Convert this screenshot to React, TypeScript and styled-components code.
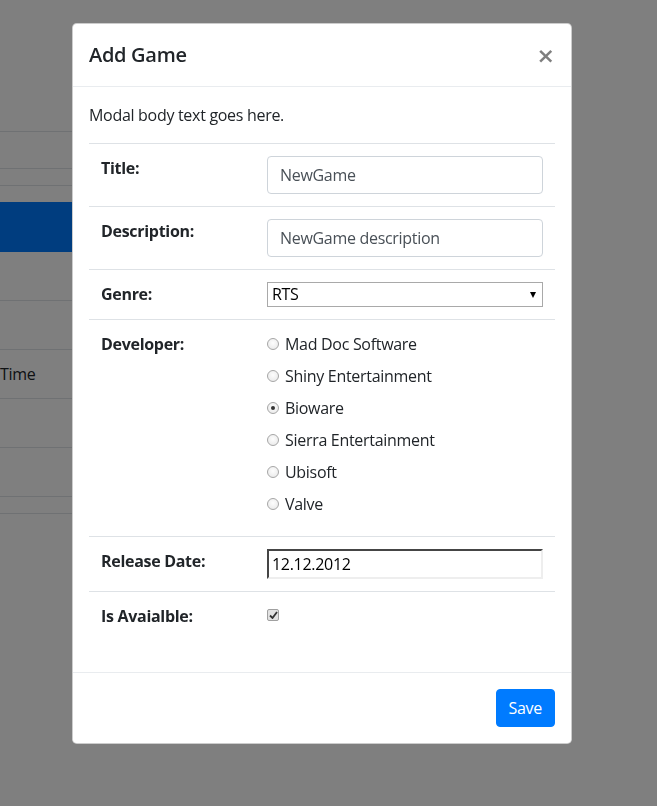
import React from 'react';
import styled, { createGlobalStyle } from 'styled-components';

const GlobalStyle = createGlobalStyle`
  html, body {
    margin: 0;
    padding: 0;
    background: #fff;
    font-family: 'Open Sans', 'Noto Sans', sans-serif;
    letter-spacing: -0.3px;
    color: #212529;
  }
`;

// --- page behind the modal ---

const Page = styled.div`
  width: 420px;
  height: 806px;
  overflow: hidden;
`;

const BgRow = styled.div<{ $h: number; $active?: boolean; $line?: boolean }>`
  box-sizing: border-box;
  height: ${p => p.$h}px;
  border-bottom: ${p => (p.$line ? '1px solid #dee2e6' : 'none')};
  background: ${p => (p.$active ? '#007bff' : 'transparent')};
  display: flex;
  align-items: center;
  font-size: 16px;
  color: #212529;
`;

const Backdrop = styled.div`
  position: fixed;
  inset: 0;
  background: rgba(0, 0, 0, 0.5);
`;

// --- modal ---

const Modal = styled.div`
  position: fixed;
  top: 23px;
  left: 72px;
  width: 500px;
  box-sizing: border-box;
  background: #fff;
  border: 1px solid rgba(0, 0, 0, 0.2);
  border-radius: 4.8px;
  display: flex;
  flex-direction: column;
`;

const Header = styled.div`
  display: flex;
  align-items: flex-start;
  justify-content: space-between;
  height: 30px;
  padding: 16px;
  border-bottom: 1px solid #e9ecef;
`;

const Title = styled.h5`
  margin: 0;
  font-size: 20px;
  font-weight: 600;
  line-height: 30px;
  color: #212529;
`;

const Close = styled.button`
  border: 0;
  background: transparent;
  padding: 0;
  margin: 0;
  height: 30px;
  font-family: 'DejaVu Sans', sans-serif;
  font-size: 22px;
  font-weight: 700;
  line-height: 32px;
  color: #000;
  opacity: 0.5;
  cursor: pointer;
`;

const Body = styled.div`
  padding: 16px;
`;

const Intro = styled.p`
  margin: 0 0 16px;
  font-size: 16px;
  line-height: 24px;
`;

const Table = styled.div`
  margin-bottom: 16px;
  border-top: 1px solid #dee2e6;
`;

const Row = styled.div<{ $last?: boolean }>`
  display: grid;
  grid-template-columns: 166px 1fr;
  border-bottom: ${p => (p.$last ? 'none' : '1px solid #dee2e6')};
`;

const Cell = styled.div`
  padding: 12px;
  font-size: 16px;
  line-height: 24px;
`;

const Label = styled(Cell)`
  font-weight: 700;
`;

const TextInput = styled.div`
  box-sizing: border-box;
  height: 38px;
  padding: 6px 12px;
  border: 1px solid #ced4da;
  border-radius: 4px;
  font-size: 16px;
  line-height: 24px;
  color: #495057;
`;

const Select = styled.div`
  position: relative;
  box-sizing: border-box;
  height: 25px;
  padding: 0 4px;
  border: 1px solid #a9a9a9;
  font-size: 16px;
  line-height: 23px;
  color: #000;
`;

const Caret = styled.span`
  position: absolute;
  right: 6px;
  top: 9px;
  width: 0;
  height: 0;
  border-left: 3.5px solid transparent;
  border-right: 3.5px solid transparent;
  border-top: 6px solid #000;
`;

const RadioList = styled.div`
  display: flex;
  flex-direction: column;
`;

const RadioItem = styled.div`
  display: flex;
  align-items: center;
  gap: 6px;
  height: 24px;
  margin-bottom: 8px;
  font-size: 16px;
  color: #212529;
`;

const Radio = styled.span<{ $checked?: boolean }>`
  box-sizing: border-box;
  width: 12px;
  height: 12px;
  border-radius: 50%;
  border: 1px solid #a6a6a6;
  background: radial-gradient(circle at 50% 40%, #fdfdfd 0%, #e6e6e6 100%);
  display: flex;
  align-items: center;
  justify-content: center;
  &::after {
    content: '';
    display: ${p => (p.$checked ? 'block' : 'none')};
    width: 4px;
    height: 4px;
    border-radius: 50%;
    background: #333;
  }
`;

const DateInput = styled.div`
  box-sizing: border-box;
  height: 30px;
  padding: 1px 3px;
  border: 2px inset #eee;
  border-top-color: #999;
  border-left-color: #999;
  border-right-color: #eee;
  border-bottom-color: #eee;
  font-size: 16px;
  line-height: 24px;
  color: #000;
`;

const CheckBox = styled.span`
  margin-top: 5px;
  box-sizing: border-box;
  width: 12px;
  height: 12px;
  border: 1px solid #a0a0a0;
  border-radius: 2px;
  background: #e2e2e2;
  display: flex;
  align-items: center;
  justify-content: center;
`;

const Footer = styled.div`
  display: flex;
  justify-content: flex-end;
  padding: 16px;
  border-top: 1px solid #e9ecef;
`;

const Button = styled.button`
  height: 38px;
  padding: 6px 12px;
  border: 1px solid #007bff;
  border-radius: 4px;
  background: #007bff;
  color: #fff;
  font-family: inherit;
  letter-spacing: inherit;
  font-size: 16px;
  line-height: 24px;
  cursor: pointer;
`;

const bgRows = [
  { h: 132, line: true },
  { h: 37, line: true },
  { h: 17, line: true },
  { h: 16 },
  { h: 50, active: true },
  { h: 49, line: true },
  { h: 49, line: true },
  { h: 49, line: true, text: 'Time' },
  { h: 49, line: true },
  { h: 49, line: true },
  { h: 17, line: true },
];

const developers = [
  'Mad Doc Software',
  'Shiny Entertainment',
  'Bioware',
  'Sierra Entertainment',
  'Ubisoft',
  'Valve',
];

export default function App() {
  return (
    <>
      <GlobalStyle />
      <Page>
        {bgRows.map((r, i) => (
          <BgRow key={i} $h={r.h} $line={r.line} $active={r.active}>
            {r.text}
          </BgRow>
        ))}
      </Page>
      <Backdrop />
      <Modal>
        <Header>
          <Title>Add Game</Title>
          <Close aria-label="Close">×</Close>
        </Header>
        <Body>
          <Intro>Modal body text goes here.</Intro>
          <Table>
            <Row>
              <Label>Title:</Label>
              <Cell>
                <TextInput>NewGame</TextInput>
              </Cell>
            </Row>
            <Row>
              <Label>Description:</Label>
              <Cell>
                <TextInput>NewGame description</TextInput>
              </Cell>
            </Row>
            <Row>
              <Label>Genre:</Label>
              <Cell>
                <Select>
                  RTS
                  <Caret />
                </Select>
              </Cell>
            </Row>
            <Row>
              <Label>Developer:</Label>
              <Cell>
                <RadioList>
                  {developers.map(d => (
                    <RadioItem key={d}>
                      <Radio $checked={d === 'Bioware'} />
                      {d}
                    </RadioItem>
                  ))}
                </RadioList>
              </Cell>
            </Row>
            <Row>
              <Label>Release Date:</Label>
              <Cell>
                <DateInput>12.12.2012</DateInput>
              </Cell>
            </Row>
            <Row $last>
              <Label>Is Avaialble:</Label>
              <Cell>
                <CheckBox>
                  <svg width="9" height="8" viewBox="0 0 9 8">
                    <path d="M1 4.5 L3.5 7 L8 1" fill="none" stroke="#333" strokeWidth="1.8" />
                  </svg>
                </CheckBox>
              </Cell>
            </Row>
          </Table>
        </Body>
        <Footer>
          <Button>Save</Button>
        </Footer>
      </Modal>
    </>
  );
}
